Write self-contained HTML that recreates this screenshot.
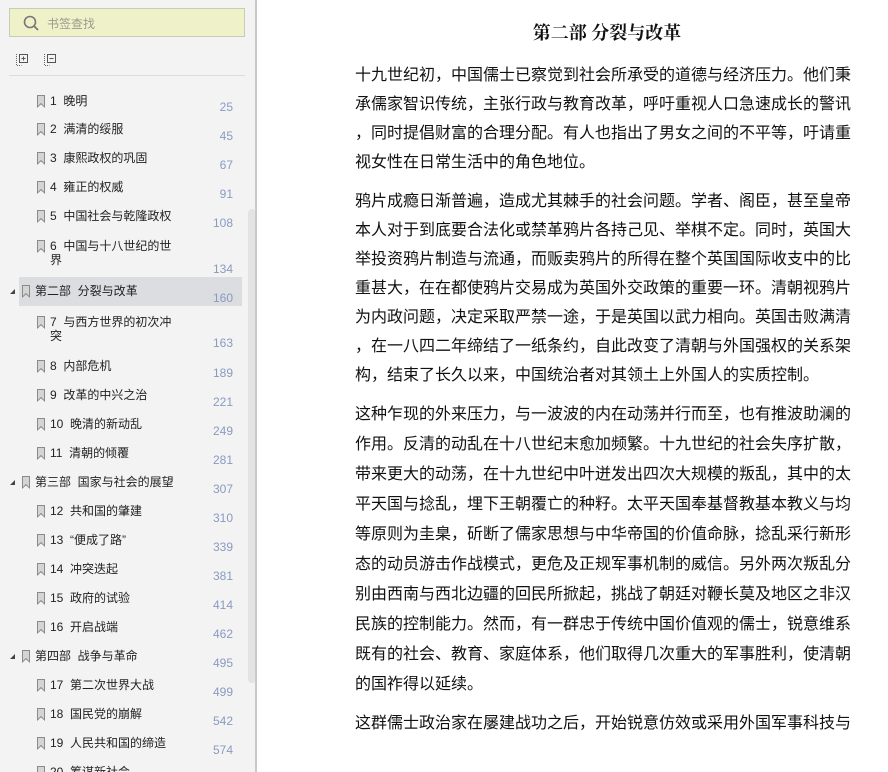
<!DOCTYPE html>
<html><head><meta charset="utf-8"><style>
*{margin:0;padding:0;box-sizing:border-box}
body{width:888px;height:772px;overflow:hidden;background:#fff;font-family:"Liberation Sans","Noto Sans CJK SC","WenQuanYi Zen Hei",sans-serif;position:relative}
#side{position:absolute;left:0;top:0;width:257px;height:772px;background:#f3f3f3;border-right:2px solid #c9c9c9;overflow:hidden}
#search{position:absolute;left:9px;top:8px;width:236px;height:29px;background:#eff2c8;border:1px solid #c9ccb4}
#search span{position:absolute;left:37px;top:6px;font-size:12px;color:#9a9a90}
#sep{position:absolute;left:9px;top:75px;width:236px;height:1px;background:#dcdcdc}
.it{position:absolute;font-size:12px;color:#222;line-height:14px}
.pn{position:absolute;right:22px;font-size:12px;color:#8a9ac0;text-align:right}
.bm{position:absolute;width:8px;height:13px;background:#8a8a8a;clip-path:polygon(0 0,100% 0,100% 100%,50% 72%,0 100%)}
.bm::after{content:"";position:absolute;left:1px;top:1px;width:6px;height:11px;background:#d4d4d4;clip-path:polygon(0 0,100% 0,100% 90%,50% 62%,0 90%)}
.tri{position:absolute;left:10px;width:0;height:0;border-left:5px solid transparent;border-bottom:5px solid #444}
#scroll{position:absolute;left:248px;top:209px;width:8px;height:474px;background:#e3e3e3;border-radius:4px}
#sel{position:absolute;left:19px;top:277px;width:223px;height:29px;background:#dcdde0}
h1{position:absolute;left:0;width:1214px;top:19px;text-align:center;font-size:18px;font-weight:bold;color:#111;font-family:"Liberation Serif","Noto Serif CJK SC",serif}
.p{position:absolute;left:355px;width:520px;font-size:16px;color:#111;white-space:nowrap}
.p div{height:29px;line-height:29px}
</style></head><body>
<div id="side">
<div id="search"><svg width="20" height="20" style="position:absolute;left:12px;top:5px" viewBox="0 0 20 20"><circle cx="8" cy="8" r="5.5" fill="none" stroke="#777" stroke-width="1.6"/><line x1="12" y1="12" x2="16" y2="16" stroke="#777" stroke-width="1.8"/></svg><span>书签查找</span></div>
<svg width="60" height="20" style="position:absolute;left:14px;top:51px" viewBox="0 0 60 20"><path d="M2.5 3v11.5h5" fill="none" stroke="#666" stroke-dasharray="1 1"/><rect x="5.5" y="3.5" width="8" height="8" fill="none" stroke="#555"/><path d="M9.5 5.5v4M7.5 7.5h4" stroke="#555"/><path d="M30.5 3v11.5h5" fill="none" stroke="#666" stroke-dasharray="1 1"/><rect x="33.5" y="3.5" width="8" height="8" fill="none" stroke="#555"/><path d="M35.5 7.5h4" stroke="#555"/></svg>
<div id="sep"></div>
<div id="sel"></div>
<div id="scroll"></div>

<div class="bm" style="left:37px;top:95px"></div><div class="it" style="left:50px;top:94px">1&nbsp;&nbsp;晚明</div><div class="pn" style="top:100px">25</div>
<div class="bm" style="left:37px;top:123px"></div><div class="it" style="left:50px;top:122px">2&nbsp;&nbsp;满清的绥服</div><div class="pn" style="top:129px">45</div>
<div class="bm" style="left:37px;top:152px"></div><div class="it" style="left:50px;top:151px">3&nbsp;&nbsp;康熙政权的巩固</div><div class="pn" style="top:158px">67</div>
<div class="bm" style="left:37px;top:181px"></div><div class="it" style="left:50px;top:180px">4&nbsp;&nbsp;雍正的权威</div><div class="pn" style="top:187px">91</div>
<div class="bm" style="left:37px;top:210px"></div><div class="it" style="left:50px;top:209px">5&nbsp;&nbsp;中国社会与乾隆政权</div><div class="pn" style="top:216px">108</div>
<div class="bm" style="left:37px;top:240px"></div><div class="it" style="left:50px;top:239px">6&nbsp;&nbsp;中国与十八世纪的世<br>界</div><div class="pn" style="top:262px">134</div>
<div class="tri" style="top:289px"></div><div class="bm" style="left:22px;top:285px"></div><div class="it" style="left:35px;top:284px">第二部&nbsp;&nbsp;分裂与改革</div><div class="pn" style="top:291px">160</div>
<div class="bm" style="left:37px;top:316px"></div><div class="it" style="left:50px;top:315px">7&nbsp;&nbsp;与西方世界的初次冲<br>突</div><div class="pn" style="top:336px">163</div>
<div class="bm" style="left:37px;top:360px"></div><div class="it" style="left:50px;top:359px">8&nbsp;&nbsp;内部危机</div><div class="pn" style="top:366px">189</div>
<div class="bm" style="left:37px;top:389px"></div><div class="it" style="left:50px;top:388px">9&nbsp;&nbsp;改革的中兴之治</div><div class="pn" style="top:395px">221</div>
<div class="bm" style="left:37px;top:418px"></div><div class="it" style="left:50px;top:417px">10&nbsp;&nbsp;晚清的新动乱</div><div class="pn" style="top:424px">249</div>
<div class="bm" style="left:37px;top:447px"></div><div class="it" style="left:50px;top:446px">11&nbsp;&nbsp;清朝的倾覆</div><div class="pn" style="top:453px">281</div>
<div class="tri" style="top:480px"></div><div class="bm" style="left:22px;top:476px"></div><div class="it" style="left:35px;top:475px">第三部&nbsp;&nbsp;国家与社会的展望</div><div class="pn" style="top:482px">307</div>
<div class="bm" style="left:37px;top:505px"></div><div class="it" style="left:50px;top:504px">12&nbsp;&nbsp;共和国的肇建</div><div class="pn" style="top:511px">310</div>
<div class="bm" style="left:37px;top:534px"></div><div class="it" style="left:50px;top:533px">13&nbsp;&nbsp;“便成了路”</div><div class="pn" style="top:540px">339</div>
<div class="bm" style="left:37px;top:563px"></div><div class="it" style="left:50px;top:562px">14&nbsp;&nbsp;冲突迭起</div><div class="pn" style="top:569px">381</div>
<div class="bm" style="left:37px;top:592px"></div><div class="it" style="left:50px;top:591px">15&nbsp;&nbsp;政府的试验</div><div class="pn" style="top:598px">414</div>
<div class="bm" style="left:37px;top:621px"></div><div class="it" style="left:50px;top:620px">16&nbsp;&nbsp;开启战端</div><div class="pn" style="top:627px">462</div>
<div class="tri" style="top:654px"></div><div class="bm" style="left:22px;top:650px"></div><div class="it" style="left:35px;top:649px">第四部&nbsp;&nbsp;战争与革命</div><div class="pn" style="top:656px">495</div>
<div class="bm" style="left:37px;top:679px"></div><div class="it" style="left:50px;top:678px">17&nbsp;&nbsp;第二次世界大战</div><div class="pn" style="top:685px">499</div>
<div class="bm" style="left:37px;top:708px"></div><div class="it" style="left:50px;top:707px">18&nbsp;&nbsp;国民党的崩解</div><div class="pn" style="top:714px">542</div>
<div class="bm" style="left:37px;top:737px"></div><div class="it" style="left:50px;top:736px">19&nbsp;&nbsp;人民共和国的缔造</div><div class="pn" style="top:743px">574</div>
<div class="bm" style="left:37px;top:766px"></div><div class="it" style="left:50px;top:765px">20&nbsp;&nbsp;筹谋新社会</div>
</div>

<h1>第二部 分裂与改革</h1>

<div class="p" style="top:61px">
<div>十九世纪初，中国儒士已察觉到社会所承受的道德与经济压力。他们秉</div>
<div>承儒家智识传统，主张行政与教育改革，呼吁重视人口急速成长的警讯</div>
<div>，同时提倡财富的合理分配。有人也指出了男女之间的不平等，吁请重</div>
<div>视女性在日常生活中的角色地位。</div>
</div>
<div class="p" style="top:187px">
<div>鸦片成瘾日渐普遍，造成尤其棘手的社会问题。学者、阁臣，甚至皇帝</div>
<div>本人对于到底要合法化或禁革鸦片各持己见、举棋不定。同时，英国大</div>
<div>举投资鸦片制造与流通，而贩卖鸦片的所得在整个英国国际收支中的比</div>
<div>重甚大，在在都使鸦片交易成为英国外交政策的重要一环。清朝视鸦片</div>
<div>为内政问题，决定采取严禁一途，于是英国以武力相向。英国击败满清</div>
<div>，在一八四二年缔结了一纸条约，自此改变了清朝与外国强权的关系架</div>
<div>构，结束了长久以来，中国统治者对其领土上外国人的实质控制。</div>
</div>
<div class="p" style="top:400px">
<div style="height:30px;line-height:30px">这种乍现的外来压力，与一波波的内在动荡并行而至，也有推波助澜的</div>
<div style="height:30px;line-height:30px">作用。反清的动乱在十八世纪末愈加频繁。十九世纪的社会失序扩散，</div>
<div style="height:30px;line-height:30px">带来更大的动荡，在十九世纪中叶迸发出四次大规模的叛乱，其中的太</div>
<div style="height:30px;line-height:30px">平天国与捻乱，埋下王朝覆亡的种籽。太平天国奉基督教基本教义与均</div>
<div style="height:30px;line-height:30px">等原则为圭臬，斫断了儒家思想与中华帝国的价值命脉，捻乱采行新形</div>
<div style="height:30px;line-height:30px">态的动员游击作战模式，更危及正规军事机制的威信。另外两次叛乱分</div>
<div style="height:30px;line-height:30px">别由西南与西北边疆的回民所掀起，挑战了朝廷对鞭长莫及地区之非汉</div>
<div style="height:30px;line-height:30px">民族的控制能力。然而，有一群忠于传统中国价值观的儒士，锐意维系</div>
<div style="height:30px;line-height:30px">既有的社会、教育、家庭体系，他们取得几次重大的军事胜利，使清朝</div>
<div style="height:30px;line-height:30px">的国祚得以延续。</div>
</div>
<div class="p" style="top:709px">
<div>这群儒士政治家在屡建战功之后，开始锐意仿效或采用外国军事科技与</div>
</div>
</body></html>
